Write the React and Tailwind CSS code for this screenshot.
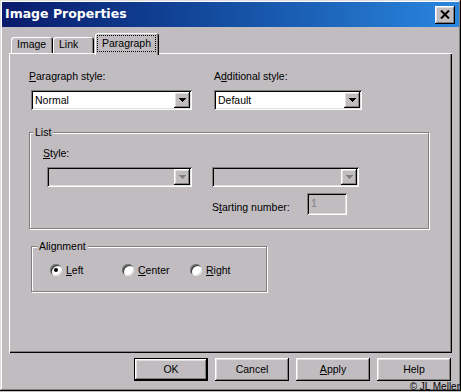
import React from "react";

// win98-ish bevels
const raised = "shadow-[inset_-1px_-1px_#000,inset_1px_1px_#fff,inset_-2px_-2px_#808080,inset_2px_2px_#dfdfdf]";
const sunken = "shadow-[inset_1px_1px_#808080,inset_-1px_-1px_#fff,inset_2px_2px_#000,inset_-2px_-2px_#dfdfdf]";
const etched = "border border-[#808080] shadow-[1px_1px_0_#fff,inset_1px_1px_0_#fff]";

function Arrow({ disabled }) {
  return (
    <svg width="7" height="4" viewBox="0 0 7 4" shapeRendering="crispEdges">
      <path
        d="M0 0h7v1h-1v1h-1v1h-1v1h-1v-1h-1v-1h-1v-1h-1z"
        fill={disabled ? "#808080" : "#000"}
      />
    </svg>
  );
}

function Dropdown({ value, className, disabled }) {
  return (
    <div
      className={`flex h-[20px] items-center p-[2px] ${sunken} ${
        disabled ? "bg-[#c0bcc0]" : "bg-white"
      } ${className}`}
    >
      <span className="flex-1 pl-[2px] leading-[16px]">{value}</span>
      <div className={`flex h-[16px] w-[16px] items-center justify-center bg-[#c0bcc0] ${raised}`}>
        <Arrow disabled={disabled} />
      </div>
    </div>
  );
}

function Radio({ checked, children, className }) {
  return (
    <div className={`flex items-center gap-[4px] ${className}`}>
      <div className="flex h-[12px] w-[12px] items-center justify-center rounded-full bg-white shadow-[inset_1px_1px_#808080,inset_-1px_-1px_#dfdfdf,inset_2px_2px_#404040]">
        {checked && <div className="h-[4px] w-[4px] rounded-full bg-black" />}
      </div>
      <span className="leading-[13px]">{children}</span>
    </div>
  );
}

function Button({ children, primary }) {
  return (
    <div
      className={`flex h-[23px] w-[74px] items-center justify-center bg-[#c0bcc0] ${
        primary
          ? "shadow-[inset_0_0_0_1px_#000,inset_-2px_-2px_#000,inset_2px_2px_#fff,inset_-3px_-3px_#808080,inset_3px_3px_#dfdfdf]"
          : raised
      }`}
    >
      {children}
    </div>
  );
}

export default function App() {
  return (
    <div className="relative h-[392px] w-[461px] overflow-hidden bg-[#c0bcc0] font-['Liberation_Sans',Arial,sans-serif] text-[10.5px] text-black">
      <div className="flex h-[391px] w-[461px] flex-col shadow-[inset_-1px_-1px_#000,inset_1px_1px_#dfdfdf,inset_-2px_-2px_#808080,inset_2px_2px_#fff]">
        {/* title bar */}
        <div className="mx-[2px] mt-[2px] flex h-[25px] items-center bg-linear-to-r from-[#0a1a6c] to-[#2a86de] pl-[3px] pr-[4px]">
          <span className="font-['DejaVu_Sans',sans-serif] text-[12.5px] font-bold text-white">
            Image Properties
          </span>
          <div className={`ml-auto flex h-[18px] w-[20px] items-center justify-center bg-[#c0bcc0] ${raised}`}>
            <svg width="10" height="9" viewBox="0 0 10 9">
              <path d="M1 0.5L9 8.5M9 0.5L1 8.5" stroke="#000" strokeWidth="2" />
            </svg>
          </div>
        </div>

        {/* tabs */}
        <div className="ml-[11px] mt-[6px] flex h-[20px] items-end">
          <div className="flex h-[16px] w-[42px] items-center rounded-t-[3px] pl-[6px] shadow-[inset_1px_1px_#fff,inset_-1px_0_#000,inset_-2px_0_#808080]">
            Image
          </div>
          <div className="flex h-[16px] w-[41px] items-center rounded-t-[3px] pl-[6px] shadow-[inset_1px_1px_#fff,inset_-1px_0_#000,inset_-2px_0_#808080]">
            Link
          </div>
          <div className="relative z-10 -mb-[2px] ml-[1px] h-[22px] w-[64px] rounded-t-[3px] bg-[#c0bcc0] pl-[2px] pt-[2px] shadow-[inset_1px_1px_#fff,inset_-1px_0_#000,inset_-2px_0_#808080]">
            <span className="block h-[17px] w-[59px] border border-dotted border-black pl-[4px] leading-[15px]">
              Paragraph
            </span>
          </div>
        </div>

        {/* panel */}
        <div className="ml-[9px] h-[300px] w-[443px] pl-[20px] pt-[17px] shadow-[inset_1px_1px_#fff,inset_-1px_-1px_#000,inset_-2px_-2px_#808080]">
          <div className="flex">
            <div className="w-[185px]">
              <div className="leading-[13px]">
                <span className="underline">P</span>aragraph style:
              </div>
              <Dropdown value="Normal" className="ml-[2px] mt-[7px] w-[161px]" />
            </div>
            <div>
              <div className="leading-[13px]">
                A<span className="underline">d</span>ditional style:
              </div>
              <Dropdown value="Default" className="mt-[7px] w-[148px]" />
            </div>
          </div>

          {/* List group */}
          <div className={`relative mt-[22px] h-[97px] w-[400px] pl-[13px] pt-[14px] ${etched}`}>
            <span className="absolute -top-[7px] left-[3px] bg-[#c0bcc0] px-[2px] leading-[13px]">List</span>
            <div className="flex">
              <div className="w-[169px]">
                <div className="leading-[13px]">
                  <span className="underline">S</span>tyle:
                </div>
                <Dropdown disabled className="ml-[4px] mt-[7px] w-[145px]" />
              </div>
              <div className="pt-[20px]">
                <Dropdown disabled className="w-[147px]" />
                <div className="mt-[6px] flex">
                  <span className="mt-[8px] w-[95px] leading-[13px]">
                    S<span className="underline">t</span>arting number:
                  </span>
                  <div className={`h-[22px] w-[40px] pl-[4px] pt-[4px] leading-[13px] text-[#808080] ${sunken}`}>
                    1
                  </div>
                </div>
              </div>
            </div>
          </div>

          {/* Alignment group */}
          <div className={`relative ml-[2px] mt-[17px] h-[46px] w-[236px] pl-[18px] pt-[17px] ${etched}`}>
            <span className="absolute -top-[7px] left-[5px] bg-[#c0bcc0] px-[2px] leading-[13px]">Alignment</span>
            <div className="flex h-[12px] items-center">
              <Radio checked className="w-[72px]">
                <span className="underline">L</span>eft
              </Radio>
              <Radio className="w-[68px]">
                <span className="underline">C</span>enter
              </Radio>
              <Radio>
                <span className="underline">R</span>ight
              </Radio>
            </div>
          </div>
        </div>

        {/* buttons */}
        <div className="mt-[5px] flex justify-end gap-[7px] pr-[10px]">
          <Button primary>OK</Button>
          <Button>Cancel</Button>
          <Button>
            <span>
              <span className="underline">A</span>pply
            </span>
          </Button>
          <Button>Help</Button>
        </div>
      </div>
      <span className="absolute bottom-0 right-[1px] text-[10px] leading-[10px]">© JL Meller</span>
    </div>
  );
}
